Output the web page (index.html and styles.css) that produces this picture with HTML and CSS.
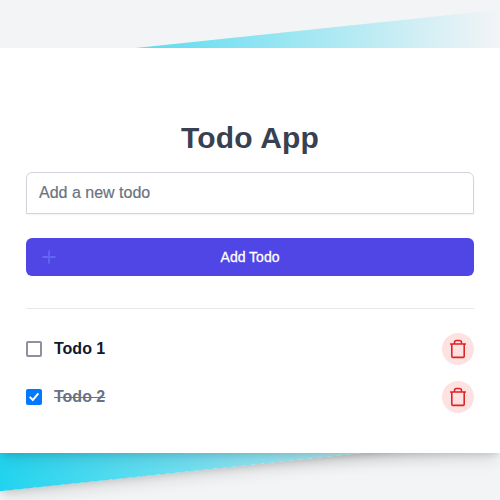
FILE: index.html
```html
<!DOCTYPE html>
<html lang="en">
<head>
<meta charset="utf-8">
<title>Todo App</title>
<link rel="stylesheet" href="styles.css">
</head>
<body>
<div class="page">
  <div class="shell">
    <div class="glow"></div>
    <main class="card">
      <h1>Todo App</h1>
      <form class="form">
        <input class="field" type="text" placeholder="Add a new todo">
        <button class="add" type="button">
          <span class="plus"><svg width="20" height="20" viewBox="0 0 20 20" fill="none" stroke="currentColor" stroke-width="1.8"><path d="M10 3.5v13M3.5 10h13"/></svg></span>
          Add Todo
        </button>
      </form>
      <ul class="list">
        <li class="item">
          <label class="label"><input type="checkbox" class="box"><span>Todo 1</span></label>
          <button class="trash" type="button" aria-label="Delete"><svg width="20" height="20" viewBox="0 0 20 20" fill="none" stroke="currentColor" stroke-width="1.6"><path d="M2 5h16M6.5 5V3.5Q6.5 1.5 8.5 1.5h3Q13.5 1.5 13.5 3.5V5M3.8 5v12.2Q3.8 18.4 5 18.4h10Q16.2 18.4 16.2 17.2V5"/></svg></button>
        </li>
        <li class="item">
          <label class="label done"><input type="checkbox" class="box" checked><span>Todo 2</span></label>
          <button class="trash" type="button" aria-label="Delete"><svg width="20" height="20" viewBox="0 0 20 20" fill="none" stroke="currentColor" stroke-width="1.6"><path d="M2 5h16M6.5 5V3.5Q6.5 1.5 8.5 1.5h3Q13.5 1.5 13.5 3.5V5M3.8 5v12.2Q3.8 18.4 5 18.4h10Q16.2 18.4 16.2 17.2V5"/></svg></button>
        </li>
      </ul>
    </main>
  </div>
</div>
</body>
</html>
```
FILE: styles.css
```css
*{box-sizing:border-box;margin:0;padding:0}
body{font-family:"Liberation Sans",Arial,sans-serif;font-size:16px;line-height:24px;color:#111827}
.page{height:500px;background:#f3f4f6;padding-top:48px;overflow:hidden}
.shell{position:relative}
.glow{position:absolute;inset:-12px 0;background:linear-gradient(to right,#22d3ee,#f3f4f6);transform:skewY(-6deg);box-shadow:0 10px 15px -3px rgba(0,0,0,.1),0 4px 6px -2px rgba(0,0,0,.1)}
.card{position:relative;height:405px;background:#fff;padding:72px 26px 0;box-shadow:0 10px 15px -3px rgba(0,0,0,.1),0 4px 6px -2px rgba(0,0,0,.1)}
h1{font-size:30px;line-height:36px;text-align:center;color:#374151;margin-bottom:16px;letter-spacing:.15px}
.form{display:flex;flex-direction:column;gap:24px}
.field{height:42px;border:1px solid #d1d5db;border-radius:6px 6px 0 0;padding:8px 12px;font:16px/24px "Liberation Sans",Arial,sans-serif;box-shadow:0 1px 2px rgba(0,0,0,.05)}
.field::placeholder{color:#6b7280;opacity:1;-webkit-text-stroke:.2px #6b7280}
.add{position:relative;height:38px;border:0;border-radius:6px;background:#4f46e5;color:#fff;font:500 14px/20px "Liberation Sans",Arial,sans-serif;-webkit-text-stroke:.3px #fff}
.plus{position:absolute;left:13px;top:0;height:100%;display:flex;align-items:center;color:#6366f1}
.list{list-style:none;margin-top:32px;border-top:1px solid #e5e7eb;padding-top:24px;display:grid;gap:16px}
.item{display:flex;align-items:center;justify-content:space-between;height:32px}
.label{display:flex;align-items:center;gap:12px;font-weight:700}
.done{color:#6b7280;text-decoration:line-through}
.box{appearance:none;width:16px;height:16px;border:2px solid #8f8f9d;border-radius:2px;background:#fff}
.box:checked{border:0;background:#0078ff}
.box:checked::after{content:"";display:block;width:16px;height:16px;background:#fff;clip-path:polygon(3px 8.6px,4.4px 7.2px,6.8px 9.6px,11.6px 3.8px,13.1px 5.1px,6.9px 12.5px)}
.trash{width:32px;height:32px;border:0;border-radius:50%;background:#fee2e2;color:#dc2626;display:grid;place-items:center}
```
